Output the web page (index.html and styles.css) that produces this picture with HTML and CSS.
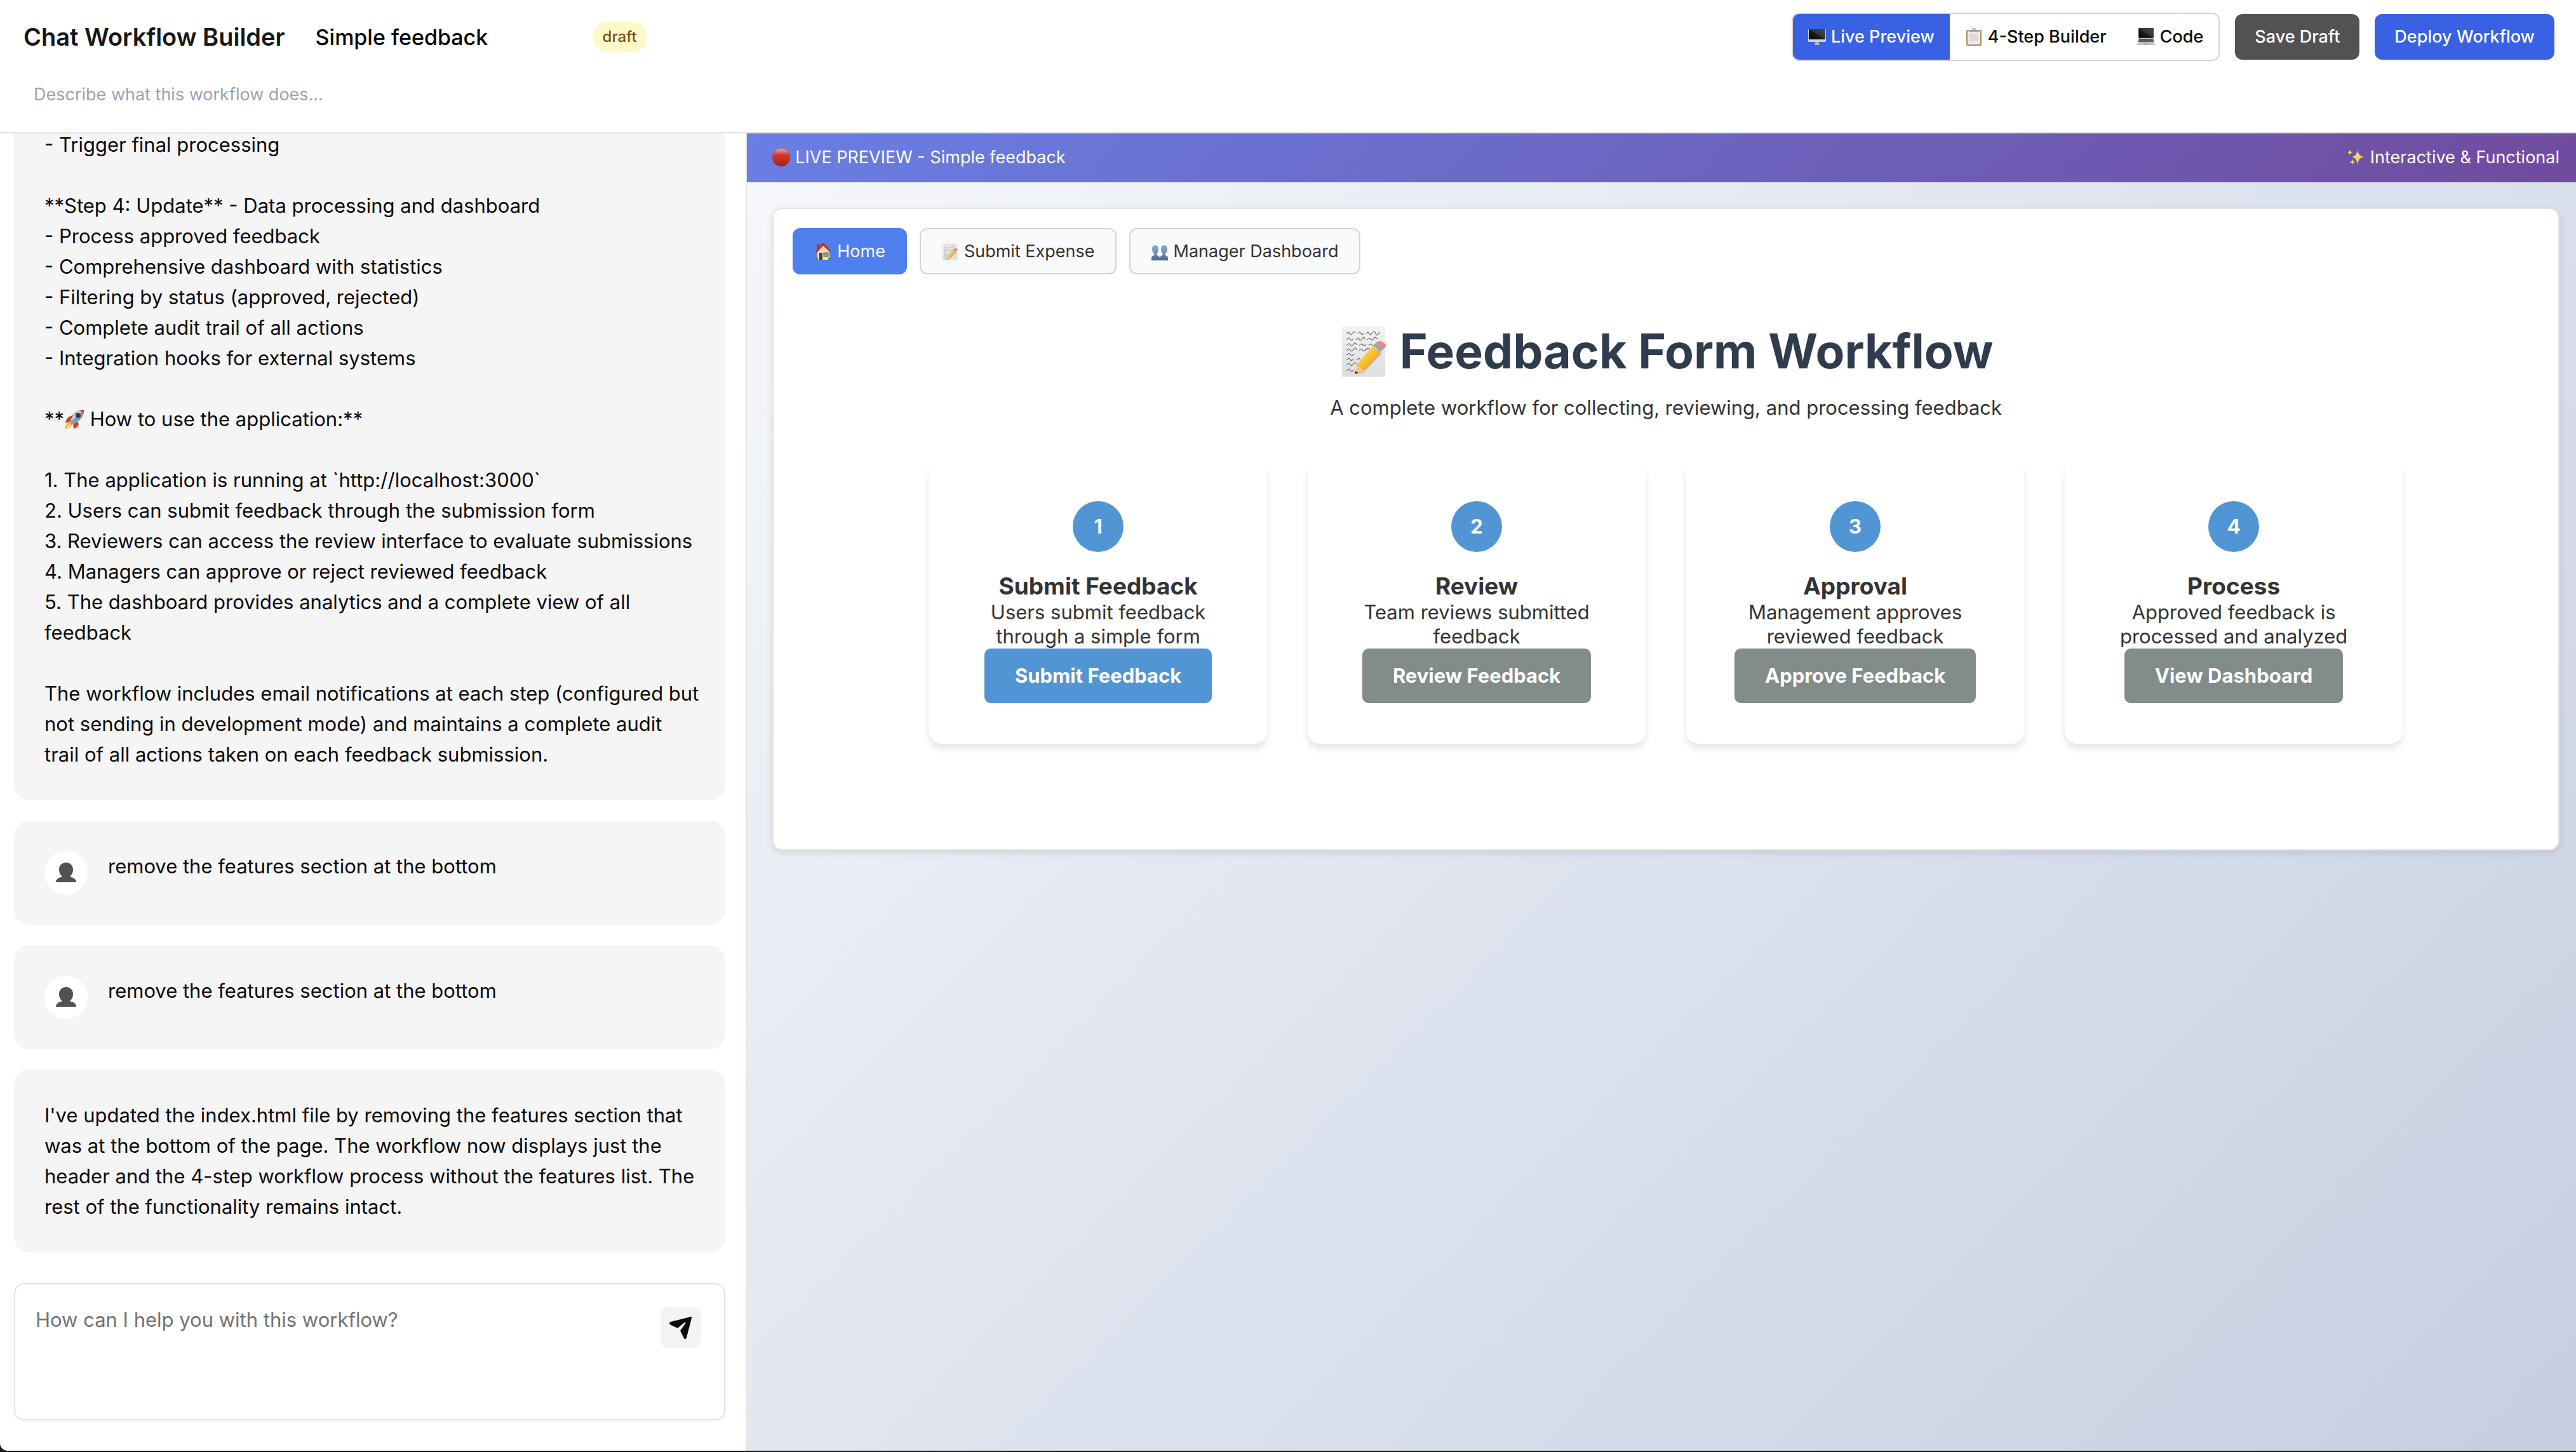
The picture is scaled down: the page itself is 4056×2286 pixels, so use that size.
FILE: index.html
```html
<!DOCTYPE html>
<html lang="en">
<head>
<meta charset="utf-8">
<title>Chat Workflow Builder</title>
<link rel="stylesheet" href="styles.css">
</head>
<body>
<svg class="defs" aria-hidden="true">
  <defs>
    <linearGradient id="g-screen" x1="0" y1="1" x2="1" y2="0"><stop offset="0" stop-color="#050505"/><stop offset=".5" stop-color="#1c1c1c"/><stop offset=".5" stop-color="#333"/><stop offset="1" stop-color="#484848"/></linearGradient>
    <linearGradient id="g-red" x1="0" y1="0" x2="0" y2="1"><stop offset="0" stop-color="#f0a59c"/><stop offset=".35" stop-color="#d8392c"/><stop offset="1" stop-color="#9c231c"/></linearGradient>
    <linearGradient id="g-bust" x1="0" y1="0" x2="0" y2="1"><stop offset="0" stop-color="#8fb0cc"/><stop offset="1" stop-color="#4a6a8d"/></linearGradient>
    <linearGradient id="g-paper" x1="0" y1="0" x2="0" y2="1"><stop offset="0" stop-color="#f3f3f3"/><stop offset="1" stop-color="#dedede"/></linearGradient>
    <linearGradient id="g-pencil" x1="0" y1="0" x2="1" y2="1"><stop offset="0" stop-color="#ffe06a"/><stop offset=".5" stop-color="#f6c12f"/><stop offset="1" stop-color="#cf8d17"/></linearGradient>
  </defs>
  <symbol id="i-monitor" viewBox="0 0 28 28">
    <rect x="0" y="2" width="28" height="20" rx="1" fill="#cfcfcf"/><rect x="1" y="2" width="26" height="16" fill="url(#g-screen)"/>
    <path d="M11 22h6v3h1v2h-8v-2h1z" fill="#b4b4b4"/>
  </symbol>
  <symbol id="i-clipboard" viewBox="0 0 28 28">
    <rect x="2" y="3" width="24" height="25" rx="2" fill="#b48a55"/><rect x="4" y="5" width="20" height="21" fill="#ececec"/>
    <rect x="7" y="9" width="13" height="12" fill="#dcdcdc"/><path d="M6 3h5q0-3 3-3t3 3h5v3H6z" fill="#9aa2aa"/><circle cx="14" cy="2" r="1" fill="#fff"/>
  </symbol>
  <symbol id="i-laptop" viewBox="0 0 28 28">
    <rect x="2" y="0" width="24" height="16" rx="1" fill="#3a3a3a"/><rect x="3" y="1" width="22" height="14" fill="url(#g-screen)"/>
    <path d="M2 16h24l2 11H0z" fill="#c4c4c4"/><path d="M3 17h22l1 5H2z" fill="#5b5b5b"/><rect x="10" y="23" width="8" height="3" fill="#aaa"/>
  </symbol>
  <symbol id="i-dot" viewBox="0 0 28 28"><circle cx="14" cy="14" r="14" fill="url(#g-red)"/></symbol>
  <symbol id="i-sparkles" viewBox="0 0 28 28">
    <path d="M16 2q1 10 10 11q-9 1-10 12q-1-11-9-12q8-1 9-11zM4 1q0 4 4 5q-4 1-4 5q0-4-4-5q4-1 4-5zM8 16q0 4 4 5q-4 1-4 5q0-4-4-5q4-1 4-5z" fill="#fbd750"/>
  </symbol>
  <symbol id="i-house" viewBox="0 0 28 28">
    <path d="M4 2h4v8H4z" fill="#a33a2c"/><path d="M5 13l10-9 9 9v14H5z" fill="#eeddb8"/>
    <path d="M2 14L12 1q2-1 4 0l10 12-1 2L14 5 4 16z" fill="#b5382a"/>
    <rect x="8" y="16" width="5" height="11" fill="#63351f"/><rect x="15" y="16" width="7" height="6" fill="#6ba3d3" stroke="#8a6a4a"/>
    <path d="M2 27q0-4 4-3v3zM22 27v-3q5-1 5 3z" fill="#5c8f2c"/>
  </symbol>
  <symbol id="i-memo" viewBox="0 0 80 80">
    <rect x="5" y="0" width="68" height="80" fill="url(#g-paper)"/>
    <g fill="none" stroke="#666" stroke-width="1.2">
      <path d="M12 13q3-5 5-1t5-1 4 1M30 12q3-4 5 0t4-1M43 12q3-4 5 0t5-1 5 1 6-2M12 22q4-5 6-1t5-1M27 22q3-5 5-1t5-1 4 1M45 22q3-4 5-1t5-1 6 1M12 31q4-5 6-1t5-1 5 1M32 31q3-4 6-1t5-1M47 31q3-4 5-1t6 0M12 39q4-5 6-1t5-1 5 1M32 39q3-4 5-1t6-1 6 1M12 46q4-4 6-1t6 0M12 54q4-5 6-1t5-1M28 54q3-4 6-1M12 62q4-5 6-1t5-1 6 1M12 71q4-5 6-1t6-1"/>
    </g>
    <path d="M30 76L38 74 68 44 62 40z" fill="#999" opacity=".5"/>
    <path d="M28 62L54 31 66 41 40 71z" fill="url(#g-pencil)"/><path d="M28 62l12 9-14 5z" fill="#ecc896"/><path d="M26 71l5 3-6 2z" fill="#333"/>
    <path d="M54 31l4-4 12 9-4 5z" fill="#93a8c4"/><path d="M58 27q4-5 10-2 8 4 6 8l-4 4z" fill="#e8888c"/>
  </symbol>
  <symbol id="i-busts" viewBox="0 0 28 28">
    <path d="M1 28v-4q0-3 4-4l1-2q-4-3-4-8 0-6 5-6t5 6q0 5-3 8l1 2q3 1 4 3 1-2 4-3l1-2q-3-3-3-8 0-6 5-6t5 6q0 5-4 8l1 2q4 1 4 4v4z" fill="url(#g-bust)"/>
  </symbol>
  <symbol id="i-rocket" viewBox="0 0 32 32">
    <path d="M8 12l7-3-4 10-9 3q1-7 6-10zM20 17l3 7q-3 6-8 7l-1-9z" fill="#d83a24"/>
    <path d="M10 20q-7 1-9 11 9-1 13-8z" fill="#f4b52c"/><path d="M9 24q-4 1-5 5 4-1 6-4z" fill="#fff2a0"/>
    <path d="M31 1q-11 0-17 8-4 6-5 12l3 3q7-2 12-6 8-7 7-17z" fill="#7c9fc4"/><path d="M31 1q-10 1-16 9-4 5-5 10z" fill="#c5d8ea"/>
    <path d="M31 1l-7 1q5 2 6 6z" fill="#c7402f"/><circle cx="22" cy="10" r="4" fill="#2f3844"/><circle cx="22" cy="10" r="2" fill="#7a2a22"/>
  </symbol>
  <symbol id="i-user" viewBox="0 0 68 68">
    <path d="M34 18c7 0 11 5 11 11 0 5-2 8-4 10-1 1 0 2 1 2 5 1 8 4 8 8H18c0-4 3-7 8-8 1 0 2-1 1-2-2-2-4-5-4-10 0-6 4-11 11-11z" fill="#525252"/>
  </symbol>
  <symbol id="i-send" viewBox="0 0 36 36">
    <path d="M34 1q2 0 1 2L27 34q-2 4-4 1l-6-12 8-11q1-3-1-2L13 19 2 14q-4-3 0-5z" fill="#0a0a0a"/>
  </symbol>
</svg>

<div class="app">
  <header class="header">
    <div class="header-row">
      <h1 class="app-title">Chat Workflow Builder</h1>
      <input class="name-input" type="text" value="Simple feedback" aria-label="Workflow name">
      <span class="badge">draft</span>
      <div class="header-actions">
        <div class="toggle">
          <button class="toggle-btn active" type="button"><svg class="icon"><use href="#i-monitor"/></svg>Live Preview</button>
          <button class="toggle-btn" type="button"><svg class="icon"><use href="#i-clipboard"/></svg>4-Step Builder</button>
          <button class="toggle-btn" type="button"><svg class="icon"><use href="#i-laptop"/></svg>Code</button>
        </div>
        <button class="btn btn-dark" type="button">Save Draft</button>
        <button class="btn btn-blue" type="button">Deploy Workflow</button>
      </div>
    </div>
    <input class="desc-input" type="text" placeholder="Describe what this workflow does..." aria-label="Workflow description">
  </header>

  <main class="main">
    <section class="chat">
      <div class="messages">
        <article class="message"><div class="message-text">- Trigger final processing

**Step 4: Update** - Data processing and dashboard
- Process approved feedback
- Comprehensive dashboard with statistics
- Filtering by status (approved, rejected)
- Complete audit trail of all actions
- Integration hooks for external systems

**<svg class="icon-text"><use href="#i-rocket"/></svg> How to use the application:**

1. The application is running at `http://localhost:3000`
2. Users can submit feedback through the submission form
3. Reviewers can access the review interface to evaluate submissions
4. Managers can approve or reject reviewed feedback
5. The dashboard provides analytics and a complete view of all feedback

The workflow includes email notifications at each step (configured but not sending in development mode) and maintains a complete audit
trail of all actions taken on each feedback submission.</div></article>
        <article class="message"><span class="avatar"><svg><use href="#i-user"/></svg></span><div class="message-text">remove the features section at the bottom</div></article>
        <article class="message"><span class="avatar"><svg><use href="#i-user"/></svg></span><div class="message-text">remove the features section at the bottom</div></article>
        <article class="message"><div class="message-text">I've updated the index.html file by removing the features section that was at the bottom of the page. The workflow now displays just the header and the 4-step workflow process without the features list. The rest of the functionality remains intact.</div></article>
      </div>
      <form class="composer">
        <textarea class="composer-input" placeholder="How can I help you with this workflow?" aria-label="Message"></textarea>
        <button class="send" type="button" aria-label="Send"><svg><use href="#i-send"/></svg></button>
      </form>
    </section>

    <section class="preview">
      <div class="banner">
        <span class="banner-item"><svg class="icon"><use href="#i-dot"/></svg>LIVE PREVIEW - Simple feedback</span>
        <span class="banner-item"><svg class="icon"><use href="#i-sparkles"/></svg>Interactive &amp; Functional</span>
      </div>
      <div class="canvas">
        <div class="page">
          <nav class="tabs">
            <button class="tab active" type="button"><svg class="icon"><use href="#i-house"/></svg>Home</button>
            <button class="tab" type="button"><svg class="icon"><use href="#i-memo"/></svg>Submit Expense</button>
            <button class="tab" type="button"><svg class="icon"><use href="#i-busts"/></svg>Manager Dashboard</button>
          </nav>
          <div class="hero">
            <h2 class="hero-title"><svg class="icon-hero"><use href="#i-memo"/></svg>Feedback Form Workflow</h2>
            <p class="hero-sub">A complete workflow for collecting, reviewing, and processing feedback</p>
          </div>
          <div class="steps">
            <div class="step"><span class="step-num">1</span><h3 class="step-title">Submit Feedback</h3><p class="step-text">Users submit feedback through a simple form</p><button class="step-btn primary" type="button">Submit Feedback</button></div>
            <div class="step"><span class="step-num">2</span><h3 class="step-title">Review</h3><p class="step-text">Team reviews submitted feedback</p><button class="step-btn" type="button">Review Feedback</button></div>
            <div class="step"><span class="step-num">3</span><h3 class="step-title">Approval</h3><p class="step-text">Management approves reviewed feedback</p><button class="step-btn" type="button">Approve Feedback</button></div>
            <div class="step"><span class="step-num">4</span><h3 class="step-title">Process</h3><p class="step-text">Approved feedback is processed and analyzed</p><button class="step-btn" type="button">View Dashboard</button></div>
          </div>
        </div>
      </div>
    </section>
  </main>
</div>
</body>
</html>
```
FILE: styles.css
```css
* { box-sizing: border-box; margin: 0; padding: 0; }

body {
  background: #141b14;
  color: #0a0a0a;
  font-family: Inter, "Liberation Sans", sans-serif;
  font-size: 31px;
  line-height: 48px;
}

button, input, textarea { font: inherit; color: inherit; border: 0; background: none; outline: 0; }
button { cursor: pointer; white-space: nowrap; }

.defs { position: absolute; width: 0; height: 0; }
.icon { width: 28px; height: 28px; flex: none; }

.app {
  display: flex;
  flex-direction: column;
  height: calc(100vh - 2px);
  background: #fff;
  border-bottom-left-radius: 12px;
  overflow: hidden;
}

/* Header */
.header {
  display: flex;
  flex-direction: column;
  gap: 16px;
  padding: 20px 34px 24px 37px;
  border-bottom: 2px solid #e5e5e5;
}
.header-row { display: flex; align-items: center; gap: 32px; }
.app-title { font-size: 38px; font-weight: 600; color: #171717; white-space: nowrap; }
.name-input { width: 420px; height: 60px; padding: 0 16px; font-size: 34px; font-weight: 500; color: #000; }
.badge { padding: 0 16px; border-radius: 24px; background: #fef9c9; color: #854d1e; font-size: 24px; font-weight: 500; }
.header-actions { display: flex; align-items: center; gap: 24px; margin-left: auto; }
.toggle { display: flex; border: 2px solid #d4d4d4; border-radius: 12px; overflow: hidden; }
.toggle-btn {
  display: flex;
  align-items: center;
  gap: 8px;
  height: 72px;
  padding: 0 24px;
  font-size: 27px;
  font-weight: 500;
}
.toggle-btn.active { background: #3861e4; color: #fff; }
.btn { height: 72px; padding: 0 31px; border-radius: 12px; color: #fff; font-size: 27px; font-weight: 500; }
.btn-dark { background: #525252; }
.btn-blue { background: #3861e4; }
.desc-input { width: 100%; height: 72px; padding: 0 16px; font-size: 27px; }
.desc-input::placeholder { color: #9ca3af; }

.main { display: flex; flex: 1; min-height: 0; }

/* Chat column */
.chat {
  display: flex;
  flex-direction: column;
  gap: 48px;
  flex: 0 0 29%;
  padding: 0 32px 48px 22px;
  border-right: 2px solid #e5e5e5;
}
.messages {
  display: flex;
  flex: 1;
  flex-direction: column;
  justify-content: flex-end;
  gap: 32px;
  min-height: 0;
  overflow: hidden;
}
.message {
  display: flex;
  flex: none;
  gap: 32px;
  padding: 48px 32px 48px 48px;
  border-radius: 24px;
  background: #f5f5f5;
}
.message-text { white-space: pre-line; }
.icon-text { width: 32px; height: 32px; vertical-align: -5px; }
.avatar { width: 68px; height: 68px; border-radius: 50%; background: #fff; flex: none; }
.avatar svg { display: block; width: 68px; height: 68px; }

.composer {
  display: flex;
  align-items: flex-start;
  height: 216px;
  padding: 32px 36px 32px 32px;
  border: 2px solid #e5e5e5;
  border-radius: 16px;
  box-shadow: 0 2px 4px rgba(0, 0, 0, 0.06);
}
.composer-input { flex: 1; height: 100%; resize: none; }
.composer-input::placeholder { color: #737373; }
.send {
  display: flex;
  align-items: center;
  justify-content: center;
  width: 64px;
  height: 64px;
  margin-top: 4px;
  border-radius: 12px;
  background: #f3f3f3;
}
.send svg { width: 36px; height: 36px; }

/* Preview column */
.preview { display: flex; flex: 1; flex-direction: column; min-width: 0; }
.banner {
  display: flex;
  justify-content: space-between;
  padding: 14px 26px 15px 40px;
  background: linear-gradient(135deg, #697fe5 0%, #704b9e 100%);
  color: #fff;
  font-size: 27px;
}
.banner-item { display: flex; align-items: center; gap: 8px; }
.canvas { flex: 1; padding: 40px 26px 40px 40px; background: linear-gradient(135deg, #f5f7fa 0%, #c5cfe1 100%); }
.page {
  padding: 30px 30px 166px;
  border: 2px solid #e1e5ea;
  border-radius: 16px;
  background: #fff;
  box-shadow: 0 4px 12px rgba(0, 0, 0, 0.1);
  color: #333;
}
.tabs { display: flex; gap: 20px; }
.tab {
  display: flex;
  align-items: center;
  gap: 8px;
  height: 73px;
  padding: 0 32px;
  border: 2px solid #d1d5db;
  border-radius: 12px;
  background: #f9fafc;
  font-size: 27px;
}
.tab.active { border-color: #4d80ee; background: #4d80ee; color: #fff; }

.hero { padding: 73px 0 64px; text-align: center; }
.hero-title {
  display: flex;
  align-items: center;
  justify-content: center;
  gap: 16px;
  margin-bottom: 22px;
  color: #2f3c4e;
  font-size: 75px;
  font-weight: 700;
  line-height: 96px;
}
.icon-hero { width: 80px; height: 80px; flex: none; }
.hero-sub { line-height: 38px; }

.steps {
  display: grid;
  grid-template-columns: repeat(4, 1fr);
  gap: 64px;
  max-width: 2320px;
  margin: 0 auto;
}
.step {
  display: flex;
  flex-direction: column;
  align-items: center;
  padding: 64px;
  border-radius: 20px;
  background: #fff;
  box-shadow: 0 8px 12px rgba(0, 0, 0, 0.1);
  text-align: center;
}
.step-num {
  width: 80px;
  height: 80px;
  margin-bottom: 32px;
  border-radius: 50%;
  background: #5295d5;
  color: #fff;
  font-weight: 700;
  line-height: 80px;
}
.step-title { font-size: 37px; font-weight: 700; line-height: 44px; }
.step-text { line-height: 38px; }
.step-btn {
  height: 86px;
  padding: 0 48px;
  border-radius: 10px;
  background: #818c8b;
  color: #fff;
  font-weight: 700;
}
.step-btn.primary { background: #5295d5; }
```
